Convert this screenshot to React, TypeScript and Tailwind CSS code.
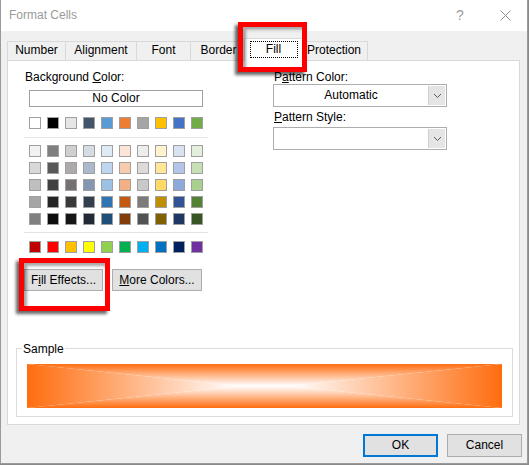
import React from "react";

const theme = [
  "bg-[#ffffff]",
  "bg-[#000000]",
  "bg-[#e7e6e6]",
  "bg-[#44546a]",
  "bg-[#5b9bd5]",
  "bg-[#ed7d31]",
  "bg-[#a5a5a5]",
  "bg-[#ffc000]",
  "bg-[#4472c4]",
  "bg-[#70ad47]",
];

const tints = [
  ["bg-[#f2f2f2]", "bg-[#7f7f7f]", "bg-[#d0cece]", "bg-[#d6dce4]", "bg-[#ddebf7]", "bg-[#fce4d6]", "bg-[#ededed]", "bg-[#fff2cc]", "bg-[#d9e1f2]", "bg-[#e2efda]"],
  ["bg-[#d9d9d9]", "bg-[#595959]", "bg-[#aeaaaa]", "bg-[#acb9ca]", "bg-[#bdd7ee]", "bg-[#f8cbad]", "bg-[#dbdbdb]", "bg-[#ffe699]", "bg-[#b4c6e7]", "bg-[#c6e0b4]"],
  ["bg-[#bfbfbf]", "bg-[#404040]", "bg-[#757171]", "bg-[#8497b0]", "bg-[#9bc2e6]", "bg-[#f4b084]", "bg-[#c9c9c9]", "bg-[#ffd966]", "bg-[#8ea9db]", "bg-[#a9d08e]"],
  ["bg-[#a6a6a6]", "bg-[#262626]", "bg-[#3a3838]", "bg-[#333f4f]", "bg-[#2f75b5]", "bg-[#c65911]", "bg-[#7b7b7b]", "bg-[#bf8f00]", "bg-[#305496]", "bg-[#548235]"],
  ["bg-[#808080]", "bg-[#0d0d0d]", "bg-[#161616]", "bg-[#222b35]", "bg-[#1f4e78]", "bg-[#833c0c]", "bg-[#525252]", "bg-[#806000]", "bg-[#203764]", "bg-[#375623]"],
];

const standard = [
  "bg-[#c00000]",
  "bg-[#ff0000]",
  "bg-[#ffc000]",
  "bg-[#ffff00]",
  "bg-[#92d050]",
  "bg-[#00b050]",
  "bg-[#00b0f0]",
  "bg-[#0070c0]",
  "bg-[#002060]",
  "bg-[#7030a0]",
];

function SwatchRow({ colors }: { colors: string[] }) {
  return (
    <div className="flex gap-[6px] ml-[5px] h-[12px]">
      {colors.map((c, i) => (
        <div key={i} className={`w-[12px] h-[12px] border border-[#a0a0a0] ${c}`} />
      ))}
    </div>
  );
}

function Chevron() {
  return (
    <svg width="9" height="6" viewBox="0 0 9 6">
      <path d="M1 1 L4.5 4.5 L8 1" fill="none" stroke="#5a5a5a" strokeWidth="1" />
    </svg>
  );
}

function Dropdown({ value }: { value: string }) {
  return (
    <div className="h-[23px] border border-[#adadad] bg-white flex">
      <div className="flex-1 flex items-center justify-center leading-[15px]">{value}</div>
      <div className="w-[17px] m-px ml-0 bg-[#e5e5e5] border-l border-[#d0d0d0] flex items-center justify-center">
        <Chevron />
      </div>
    </div>
  );
}

function Tab({ label, w, first }: { label: string; w: string; first?: boolean }) {
  return (
    <div
      className={`${w} ${first ? "" : "-ml-px"} h-[19px] mb-px border-t border-l border-r border-[#d9d9d9] bg-[#f0f0f0] flex justify-center pt-[1px] leading-[15px]`}
    >
      {label}
    </div>
  );
}

function Gradient() {
  const o = "#ff6d0f";
  return (
    <svg width="475" height="44" viewBox="0 0 475 44" preserveAspectRatio="none" className="block">
      <defs>
        <linearGradient id="gt" x1="0" y1="0" x2="0" y2="1">
          <stop offset="0" stopColor={o} />
          <stop offset="1" stopColor="#ffffff" />
        </linearGradient>
        <linearGradient id="gb" x1="0" y1="1" x2="0" y2="0">
          <stop offset="0" stopColor={o} />
          <stop offset="1" stopColor="#ffffff" />
        </linearGradient>
        <linearGradient id="gl" x1="0" y1="0" x2="1" y2="0">
          <stop offset="0" stopColor={o} />
          <stop offset="1" stopColor="#ffffff" />
        </linearGradient>
        <linearGradient id="gr" x1="1" y1="0" x2="0" y2="0">
          <stop offset="0" stopColor={o} />
          <stop offset="1" stopColor="#ffffff" />
        </linearGradient>
      </defs>
      <polygon points="0,0 475,0 262,22 213,22" fill="url(#gt)" />
      <polygon points="0,44 475,44 262,22 213,22" fill="url(#gb)" />
      <polygon points="0,0 0,44 213,22" fill="url(#gl)" />
      <polygon points="475,0 475,44 262,22" fill="url(#gr)" />
    </svg>
  );
}

export default function App() {
  return (
    <div className="w-[529px] h-[465px] bg-[#8a8a8a] relative overflow-hidden font-['Liberation_Sans',Arial,sans-serif] text-[12px] text-black">
      <div className="w-[528px] h-[464px] bg-[#f0f0f0] border-l border-r border-b border-[#9a9a9a] flex flex-col">
        {/* Title bar */}
        <div className="h-[31px] bg-white flex items-center pl-[8px] relative">
          <span className="text-[#9a9a9a] leading-[15px]">Format Cells</span>
          <span className="absolute left-[455px] top-[7px] text-[#9a9a9a] text-[14px] leading-[16px]">?</span>
          <svg className="absolute left-[499px] top-[10px]" width="11" height="11" viewBox="0 0 11 11">
            <path d="M0.5 0.5 L10.5 10.5 M10.5 0.5 L0.5 10.5" stroke="#8c8c8c" strokeWidth="1" />
          </svg>
        </div>

        {/* Tabs */}
        <div className="flex items-end h-[23px] mt-[7px] ml-[6px] relative z-10">
          <Tab label="Number" w="w-[59px]" first />
          <Tab label="Alignment" w="w-[72px]" />
          <Tab label="Font" w="w-[55px]" />
          <Tab label="Border" w="w-[57px]" />
          <div className="-ml-[3px] w-[59px] h-[23px] border-t border-l border-r border-[#d9d9d9] bg-white relative z-10 flex justify-center pt-[2px]">
            <div className="w-[48px] h-[17px] border border-dotted border-black flex justify-center leading-[15px]">
              Fill
            </div>
          </div>
          <div className="-ml-[3px] w-[68px] h-[19px] mb-px border-t border-l border-r border-[#d9d9d9] bg-[#f0f0f0] flex justify-center pt-[1px] leading-[15px]">
            Protection
          </div>
        </div>

        {/* Panel */}
        <div className="-mt-px ml-[6px] w-[513px] h-[365px] border border-[#d9d9d9] bg-white flex flex-col">
          <div className="flex">
            {/* Left column */}
            <div className="ml-[16px] w-[184px] flex flex-col">
              <div className="mt-[9px] h-[15px] leading-[15px] ml-px">
                Background <span className="underline">C</span>olor:
              </div>
              <div className="mt-[5px] ml-[5px] w-[174px] h-[17px] border border-[#a0a0a0] flex items-center justify-center leading-[15px]">
                No Color
              </div>
              <div className="mt-[10px]">
                <SwatchRow colors={theme} />
              </div>
              <div className="mt-[8px] h-px bg-[#e3e3e3]" />
              <div className="mt-[7px] flex flex-col gap-[5px]">
                {tints.map((row, i) => (
                  <SwatchRow key={i} colors={row} />
                ))}
              </div>
              <div className="mt-[7px] h-px bg-[#e3e3e3]" />
              <div className="mt-[8px]">
                <SwatchRow colors={standard} />
              </div>
              <div className="mt-[16px] flex gap-[9px]">
                <div className="w-[79px] h-[22px] border border-[#adadad] bg-[#e1e1e1] flex items-center justify-center leading-[15px]">
                  <span>
                    F<span className="underline">i</span>ll Effects...
                  </span>
                </div>
                <div className="w-[90px] h-[22px] border border-[#adadad] bg-[#e1e1e1] flex items-center justify-center leading-[15px]">
                  <span>
                    <span className="underline">M</span>ore Colors...
                  </span>
                </div>
              </div>
            </div>

            {/* Right column */}
            <div className="ml-[65px] w-[174px] flex flex-col">
              <div className="mt-[9px] h-[14px] leading-[15px] ml-px">
                P<span className="underline">a</span>ttern Color:
              </div>
              <Dropdown value="Automatic" />
              <div className="mt-[3px] h-[14px] leading-[15px] ml-px">
                <span className="underline">P</span>attern Style:
              </div>
              <div className="mt-[3px]">
                <Dropdown value="" />
              </div>
            </div>
          </div>

          {/* Sample */}
          <div className="mt-[57px] ml-[8px] w-[497px] h-[69px] border border-[#dcdcdc] relative">
            <span className="absolute left-[5px] top-[-7px] px-px bg-white leading-[15px]">Sample</span>
            <div className="ml-[10px] mt-[15px]">
              <Gradient />
            </div>
          </div>
        </div>

        {/* Bottom buttons */}
        <div className="mt-[9px] ml-[362px] flex gap-[9px]">
          <div className="w-[75px] h-[23px] border-2 border-[#0078d7] bg-[#e1e1e1] flex items-center justify-center leading-[15px]">
            OK
          </div>
          <div className="w-[75px] h-[23px] border border-[#adadad] bg-[#e1e1e1] flex items-center justify-center leading-[15px]">
            Cancel
          </div>
        </div>
      </div>

      {/* Red highlight boxes */}
      <div className="absolute left-[238px] top-[22px] w-[69px] h-[50px] border-[5px] border-[#ff0000] shadow-[-3px_3px_3px_rgba(0,0,0,0.6),inset_3px_3px_3px_rgba(0,0,0,0.35)] z-20" />
      <div className="absolute left-[19px] top-[258px] w-[91px] h-[53px] border-[5px] border-[#ff0000] shadow-[-3px_3px_3px_rgba(0,0,0,0.6),inset_3px_3px_3px_rgba(0,0,0,0.35)] z-20" />
    </div>
  );
}
